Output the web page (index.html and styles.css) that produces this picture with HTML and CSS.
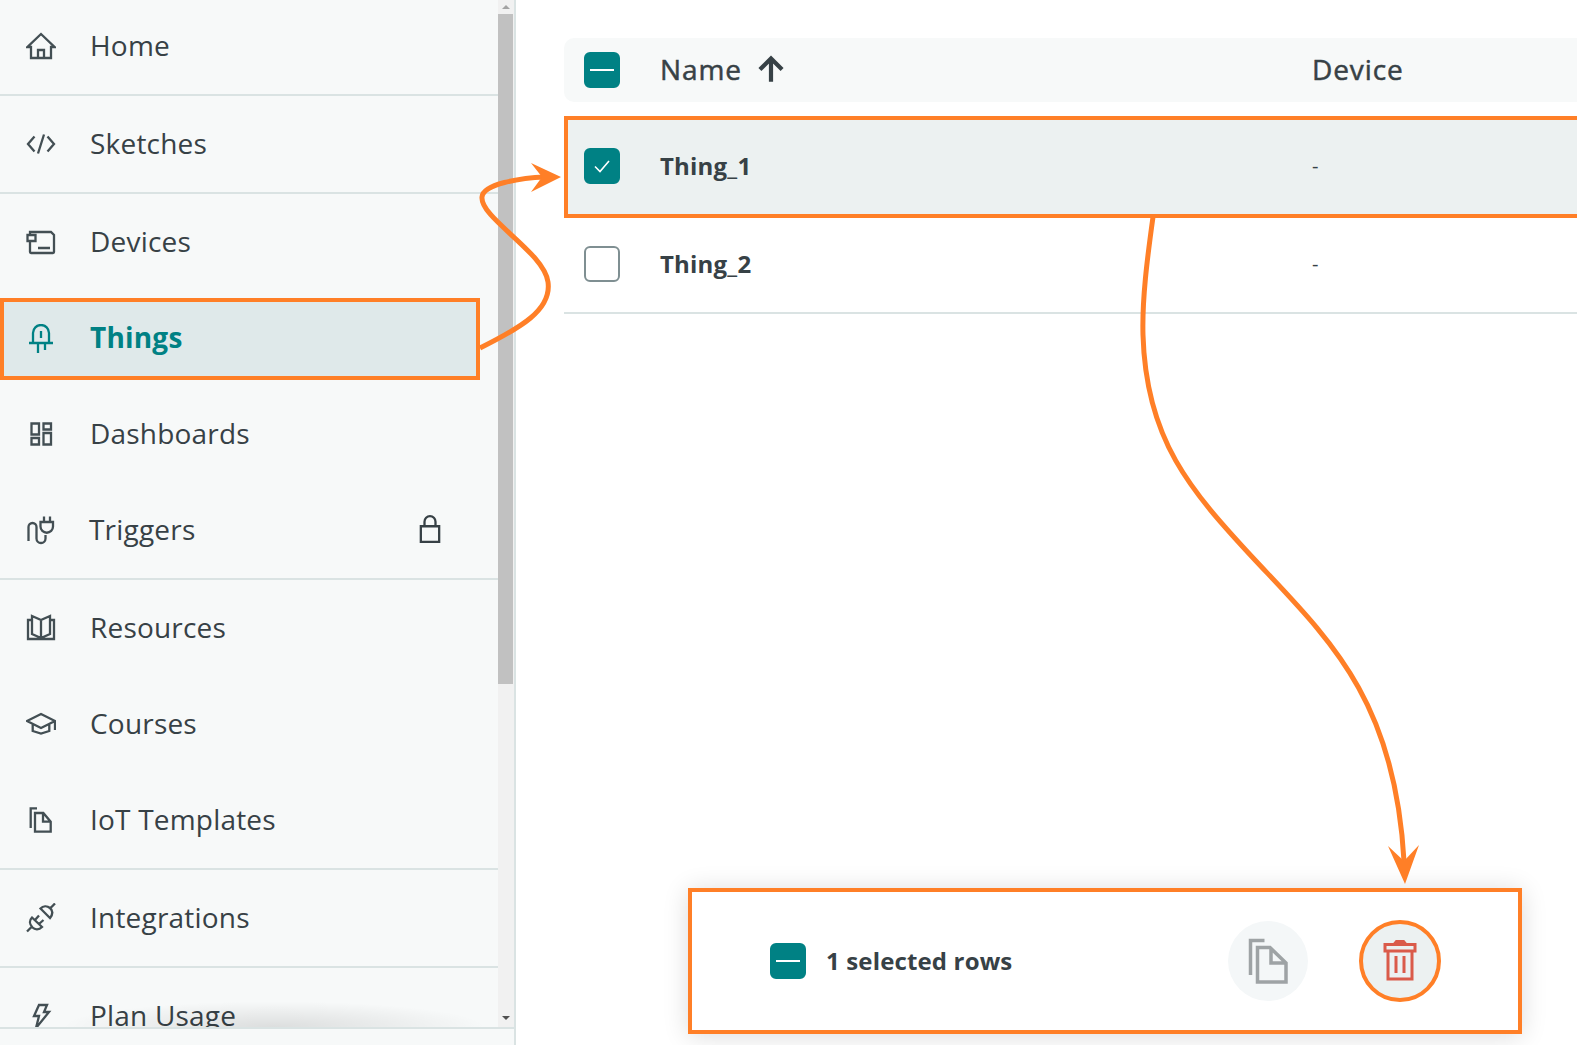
FILE: index.html
```html
<!DOCTYPE html>
<html lang="en">
<head>
    <meta charset="UTF-8">
    <meta name="viewport" content="width=device-width, initial-scale=1.0">
    <title>Things</title>
    <link rel="stylesheet" href="styles.css">
</head>
<body>
    <aside class="sidebar">
        <div class="sidebar-body">
            <nav class="nav">
                <ul class="nav-list">
                    <li class="nav-item has-line">
                        <svg class="icon" viewBox="0 0 30 30"><path d="M1.500 16h3.500v11h20V16h3.500L15 3z"/><path d="M12 27v-8h6v8"/></svg>
                        <span class="nav-label">Home</span>
                    </li>
                    <li class="nav-item has-line">
                        <svg class="icon" viewBox="0 0 30 30"><path d="M8.500 7.500 2 15l6.500 7.500M18 5.500l-6 19M21.500 7.500 28 15l-6.500 7.500"/></svg>
                        <span class="nav-label">Sketches</span>
                    </li>
                    <li class="nav-item">
                        <svg class="icon" viewBox="0 0 30 30"><path d="M4 8V5h21l3 3v17a1 1 0 0 1-1 1H5a1 1 0 0 1-1-1V14"/><path d="M1.500 8h8v6h-8zM12 21h12"/></svg>
                        <span class="nav-label">Devices</span>
                    </li>
                    <li class="nav-item is-active">
                        <div class="active-box">
                            <svg class="icon" viewBox="0 0 30 30"><path d="M7 19V9a8 8 0 0 1 16 0v10M3 19h24M12 19v10M19 19v7M15 7v7"/></svg>
                            <span class="nav-label">Things</span>
                        </div>
                    </li>
                    <li class="nav-item">
                        <svg class="icon" viewBox="0 0 30 30"><path d="M5.500 4.500h7.500v11H5.500zM17.500 4.500H25v6h-7.500zM5.500 19H13v6.500H5.500zM17.500 14H25v11.500h-7.500z"/></svg>
                        <span class="nav-label">Dashboards</span>
                    </li>
                    <li class="nav-item has-line">
                        <svg class="icon" viewBox="0 0 30 30"><path d="M2.500 26V12a4 4 0 0 1 8 0v11.500a4.500 4.500 0 0 0 9 0V20M14.500 7H27v4.500a6.250 6.250 0 0 1-12.500 0zM18 1.500V7M24 1.500V7"/></svg>
                        <span class="nav-label tight">Triggers</span>
                        <svg class="lock" viewBox="0 0 24 30"><path d="M2 12h20v17H2z"/><path d="M6 12V7a6 6 0 0 1 12 0v5"/></svg>
                    </li>
                    <li class="nav-item">
                        <svg class="icon" viewBox="0 0 30 30"><path d="M6 3l9 4v18l-9-4zM24 3l-9 4v18l9-4zM6 7H2v19h26V7h-4"/></svg>
                        <span class="nav-label">Resources</span>
                    </li>
                    <li class="nav-item">
                        <svg class="icon" viewBox="0 0 30 30"><path d="M15 5 29 12 15 19 1 12zM6.700 15.500V22l8.300 2.500 8.300-2.500v-6.500M29 12v9"/></svg>
                        <span class="nav-label">Courses</span>
                    </li>
                    <li class="nav-item has-line">
                        <svg class="icon" viewBox="0 0 30 30"><path d="M4.700 23V3.300h6.300M9 8h8.300l7.400 8.700v10H9zM17 8v8.700h7.700"/></svg>
                        <span class="nav-label">IoT Templates</span>
                    </li>
                    <li class="nav-item has-line">
                        <svg class="icon" viewBox="0 0 30 30"><path d="M14.500 5.500 24 15c3-4 3-7.500 0-10-3-2.500-7-2-9.500.5zM24.500 5 29 .5M6 14.500l10 9.500c-3 3-7 3-9.500.5-3-3-3.500-7-.5-10zM1 28.500l5-5M9 17l4-4.500M13 21l4.500-4"/></svg>
                        <span class="nav-label">Integrations</span>
                    </li>
                    <li class="nav-item">
                        <svg class="icon" viewBox="0 0 30 30"><path d="M13 4h8l-3 7h5L10 27l3-12H8z"/></svg>
                        <span class="nav-label">Plan Usage</span>
                    </li>
                </ul>
                <div class="nav-fade"></div>
            </nav>
            <div class="scrollbar">
                <span class="scroll-up"></span>
                <div class="scroll-thumb"></div>
                <span class="scroll-down"></span>
            </div>
        </div>
        <div class="sidebar-foot"></div>
    </aside>

    <main class="content">
        <div class="table-head">
            <span class="check is-on"><span class="dash"></span></span>
            <div class="col-name">
                <span>Name</span>
                <svg class="sort-arrow" viewBox="0 0 24 24"><path d="M12 23V4M2.500 12.500 12 3l9.500 9.500"/></svg>
            </div>
            <div class="col-device">Device</div>
        </div>
        <div class="table-row is-selected">
            <span class="check is-on"><svg class="tick" viewBox="0 0 20 20"><path d="M3 10.500 8 15.500 17 5"/></svg></span>
            <div class="col-name thing">Thing_1</div>
            <div class="col-device cell-dash">-</div>
        </div>
        <div class="table-row has-line">
            <span class="check"></span>
            <div class="col-name thing">Thing_2</div>
            <div class="col-device cell-dash">-</div>
        </div>

        <div class="bulk-bar">
            <span class="check is-on"><span class="dash"></span></span>
            <span class="bulk-text">1 selected rows</span>
            <button class="round-btn copy-btn">
                <svg viewBox="0 0 40 46"><path d="M2.500 37V2.500h14M9.500 9.500H22L38 25v19H9.500zM23 10v15h15"/></svg>
            </button>
            <button class="round-btn trash-btn">
                <svg viewBox="0 0 34 42"><path d="M2 4.500h30V11H2zM11 4.500l2.500-3h7l2.500 3M5 11v28h24V11M13 16v17M21 16v17"/></svg>
            </button>
        </div>
    </main>

    <!-- orange annotation arrows -->
    <svg class="arrows" viewBox="0 0 1577 1045">
        <path class="arrow-line" d="M480 348C520 328 552 310 548 282C544 252 480 218 482 197C483 184 520 178 545 177"/>
        <path class="arrow-head" d="M561 177 531 163 542 177 531 192z"/>
        <path class="arrow-line" d="M1153 217C1147 260 1142 300 1143 335C1146 440 1190 490 1255 560C1330 640 1395 700 1404 861"/>
        <path class="arrow-head" d="M1405 884 1388 846 1404 861 1419 845z"/>
    </svg>
</body>
</html>
```

FILE: styles.css
```css
html, body {
    margin: 0;
    height: 100%;
}
body {
    display: flex;
    position: relative;
    height: 1045px;
    overflow: hidden;
    background: #ffffff;
    font-family: "Open Sans", sans-serif;
    color: #374146;
}

/* sidebar */
.sidebar {
    width: 514px;
    flex: none;
    display: flex;
    flex-direction: column;
    background: #f7f9f9;
    border-right: 2px solid #dae3e3;
}
.sidebar-body {
    display: flex;
    height: 1027px;
}
.nav {
    position: relative;
    flex: 1;
    overflow: hidden;
}
.nav-list {
    list-style: none;
    margin: -2px 0 0;
    padding: 0;
}
.nav-item {
    display: flex;
    align-items: center;
    height: 96px;
    padding-left: 26px;
    padding-right: 57px;
}
.nav-item.has-line {
    border-bottom: 2px solid #dae3e3;
}
.nav-label {
    margin-left: 34px;
    padding-bottom: 2px;
    font-size: 28px;
    letter-spacing: 0.2px;
}
.nav-label.tight {
    margin-left: 33px;
}
.icon {
    width: 30px;
    height: 30px;
    flex: none;
    fill: none;
    stroke: #434f54;
    stroke-width: 2.3;
}
.lock {
    width: 22px;
    height: 30px;
    margin-left: auto;
    margin-top: -2px;
    fill: none;
    stroke: #374146;
    stroke-width: 2.5;
}
.is-active {
    padding: 0;
}
.active-box {
    display: flex;
    align-items: center;
    box-sizing: border-box;
    width: 480px;
    height: 82px;
    margin-top: 2px;
    padding-left: 26px;
    background: #dfe9ea;
    border: 4px solid #ff7f27;
}
.active-box .icon {
    margin-left: -4px;
    stroke: #008184;
}
.active-box .nav-label {
    padding-bottom: 4px;
    color: #008184;
    font-weight: 700;
    letter-spacing: 0.2px;
}
.nav-fade {
    position: absolute;
    left: 60px;
    right: 10px;
    bottom: 0;
    height: 26px;
    background: radial-gradient(ellipse at 50% 100%, rgba(0, 0, 0, 0.11), rgba(0, 0, 0, 0) 70%);
}
.sidebar-foot {
    flex: 1;
    border-top: 2px solid #dae3e3;
}

/* fake scrollbar */
.scrollbar {
    width: 16px;
    flex: none;
    display: flex;
    flex-direction: column;
    align-items: center;
    background: #f1f1f1;
}
.scroll-up, .scroll-down {
    width: 0;
    height: 0;
    border-left: 4px solid transparent;
    border-right: 4px solid transparent;
}
.scroll-up {
    margin: 5px 0 5px;
    border-bottom: 4px solid #a3a3a3;
}
.scroll-down {
    margin: auto 0 7px;
    border-top: 4px solid #505050;
}
.scroll-thumb {
    align-self: flex-start;
    width: 15px;
    height: 670px;
    background: #c1c1c1;
}

/* table */
.content {
    flex: 1;
    min-width: 0;
    padding: 38px 0 0 48px;
}
.table-head, .table-row {
    display: flex;
    align-items: center;
    box-sizing: border-box;
    padding-left: 20px;
}
.table-head {
    height: 64px;
    margin-bottom: 14px;
    background: #f7f9f9;
    border-radius: 10px 0 0 10px;
}
.table-row {
    height: 96px;
    padding-bottom: 2px;
}
.table-row.is-selected {
    height: 102px;
    padding-left: 16px;
    background: #ecf1f1;
    border: 4px solid #ff7f27;
    border-right: 0;
}
.table-row.has-line {
    border-bottom: 2px solid #dae3e3;
}
.check {
    box-sizing: border-box;
    display: flex;
    align-items: center;
    justify-content: center;
    width: 36px;
    height: 36px;
    flex: none;
    border: 2px solid #7f8f92;
    border-radius: 6px;
    background: #ffffff;
}
.check.is-on {
    background: #008184;
    border-color: #008184;
}
.dash {
    width: 24px;
    height: 2px;
    background: #ffffff;
}
.tick {
    width: 20px;
    height: 20px;
    fill: none;
    stroke: #ffffff;
    stroke-width: 1.6;
}
.col-name {
    display: flex;
    align-items: center;
    width: 652px;
    margin-left: 40px;
    padding-bottom: 2px;
    font-size: 28px;
    letter-spacing: 0.9px;
    -webkit-text-stroke: 0.5px #374146;
}
.col-device {
    padding-bottom: 2px;
    font-size: 28px;
    letter-spacing: 0.9px;
    -webkit-text-stroke: 0.5px #374146;
}
.sort-arrow {
    width: 28px;
    height: 28px;
    margin-left: 15px;
    fill: none;
    stroke: #374146;
    stroke-width: 3.6;
}
.thing {
    font-size: 24px;
    font-weight: 700;
    letter-spacing: 0.2px;
    -webkit-text-stroke: 0;
}
.cell-dash {
    font-size: 20px;
    -webkit-text-stroke: 0;
}

/* floating bar at the bottom */
.bulk-bar {
    position: absolute;
    left: 688px;
    top: 888px;
    box-sizing: border-box;
    display: flex;
    align-items: center;
    width: 834px;
    height: 146px;
    padding-left: 78px;
    background: #ffffff;
    border: 4px solid #ff7f27;
    box-shadow: 0 2px 24px rgba(0, 0, 0, 0.14);
}
.bulk-text {
    margin-left: 20px;
    padding-bottom: 2px;
    font-size: 24px;
    font-weight: 700;
    letter-spacing: 0.15px;
}
.round-btn {
    box-sizing: border-box;
    display: flex;
    align-items: center;
    justify-content: center;
    width: 80px;
    height: 80px;
    padding: 0;
    border: none;
    border-radius: 50%;
}
.round-btn svg {
    fill: none;
}
.copy-btn {
    margin-left: auto;
    background: #f4f7f8;
}
.copy-btn svg {
    width: 40px;
    height: 46px;
    stroke: #9ea3a5;
    stroke-width: 3.5;
}
.trash-btn {
    width: 82px;
    height: 82px;
    margin: 0 77px 0 51px;
    background: #ecf1f1;
    border: 4px solid #ff7f27;
}
.trash-btn svg {
    width: 34px;
    height: 42px;
    stroke: #da5b4a;
    stroke-width: 3;
}

/* annotations */
.arrows {
    position: absolute;
    left: 0;
    top: 0;
    width: 1577px;
    height: 1045px;
    pointer-events: none;
}
.arrow-line {
    fill: none;
    stroke: #ff7f27;
    stroke-width: 5;
}
.arrow-head {
    fill: #ff7f27;
}
```
